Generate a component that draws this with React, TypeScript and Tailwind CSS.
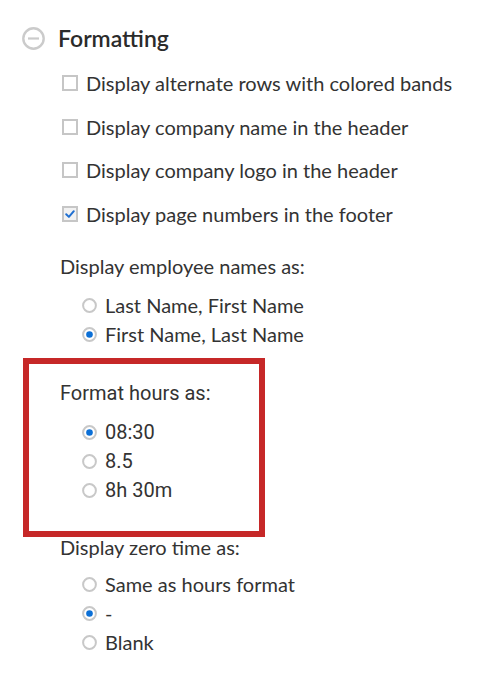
import React from "react";

type CheckProps = { label: string; checked?: boolean };

const CheckRow: React.FC<CheckProps> = ({ label, checked }) => (
  <div className="flex h-[43.7px] items-center gap-[8px]">
    <svg width="16" height="16" viewBox="0 0 16 16" className="shrink-0">
      <rect x="1" y="1" width="14" height="14" fill={checked ? "#f2f2f2" : "#fff"} stroke="#c6c6c6" strokeWidth="2" />
      {checked && (
        <path d="M4.2 8.3 L6.9 10.9 L11.8 5.2" fill="none" stroke="#1f6fd1" strokeWidth="2" strokeLinecap="round" strokeLinejoin="round" />
      )}
    </svg>
    <span>{label}</span>
  </div>
);

type RadioProps = { label: string; checked?: boolean };

const RadioRow: React.FC<RadioProps> = ({ label, checked }) => (
  <div className="flex h-[29px] items-center gap-[8px]">
    <svg width="15" height="15" viewBox="0 0 15 15" className="shrink-0">
      <circle cx="7.5" cy="7.5" r="6.4" fill="#fff" stroke="#c8c8c8" strokeWidth="2" />
      {checked && <circle cx="7.5" cy="7.5" r="3.3" fill="#0b6fd6" />}
    </svg>
    <span>{label}</span>
  </div>
);

export default function App() {
  return (
    <div className="h-[682px] w-[483px] overflow-hidden bg-white font-['Lato',sans-serif] text-[20px] text-[#333]">
      {/* heading */}
      <div className="ml-[22px] mt-[23px] flex h-[30px] items-center gap-[13px]">
        <svg width="23" height="23" viewBox="0 0 23 23" className="shrink-0">
          <circle cx="11.5" cy="11.5" r="10.2" fill="none" stroke="#cbcbcb" strokeWidth="2.4" />
          <line x1="6" y1="11.5" x2="17" y2="11.5" stroke="#cbcbcb" strokeWidth="2.2" />
        </svg>
        <h2 className="text-[23px] font-semibold text-[#2b2b2b]">Formatting</h2>
      </div>

      {/* checkbox options */}
      <div className="ml-[62px] mt-[8px] flex flex-col">
        <CheckRow label="Display alternate rows with colored bands" />
        <CheckRow label="Display company name in the header" />
        <CheckRow label="Display company logo in the header" />
        <CheckRow label="Display page numbers in the footer" checked />
      </div>

      {/* employee names */}
      <div className="ml-[60px] mt-[16px] flex h-[28px] items-center">Display employee names as:</div>
      <div className="ml-[82px] mt-[11px] flex flex-col">
        <RadioRow label="Last Name, First Name" />
        <RadioRow label="First Name, Last Name" checked />
      </div>

      {/* hours format (highlighted) */}
      <div className="ml-[23px] mt-[9px] w-[242px] border-[6px] border-[#c62828] pb-[26px] pl-[31px] pt-[15px] font-['Roboto',sans-serif] text-[20px] text-[#333]">
        <div className="flex h-[28px] items-center">Format hours as:</div>
        <div className="ml-[22px] mt-[11px] flex flex-col">
          <RadioRow label="08:30" checked />
          <RadioRow label="8.5" />
          <RadioRow label="8h 30m" />
        </div>
      </div>

      {/* zero time */}
      <div className="ml-[60px] flex h-[20px] items-center leading-[20px]">Display zero time as:</div>
      <div className="ml-[82px] mt-[13px] flex flex-col">
        <RadioRow label="Same as hours format" />
        <RadioRow label="-" checked />
        <RadioRow label="Blank" />
      </div>
    </div>
  );
}
